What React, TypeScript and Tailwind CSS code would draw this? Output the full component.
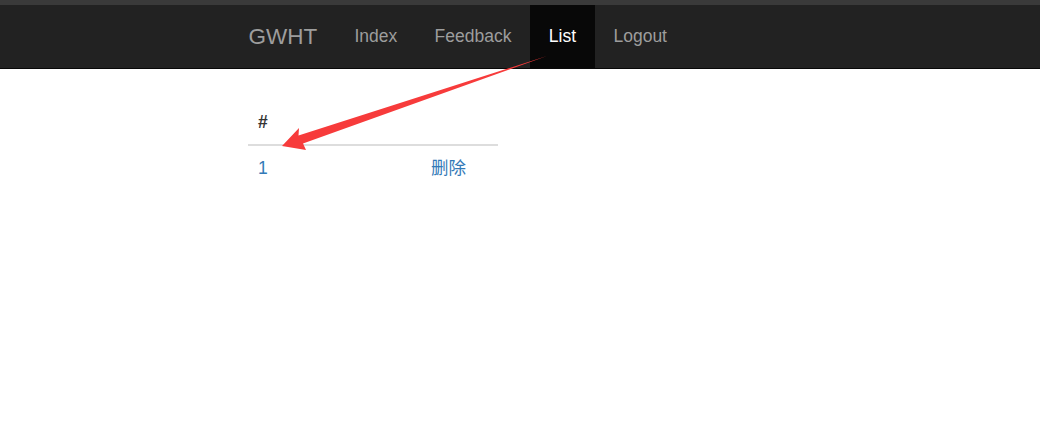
const navItems = [
  { label: "Index", active: false },
  { label: "Feedback", active: false },
  { label: "List", active: true },
  { label: "Logout", active: false },
];

const rows = [{ id: 1 }];

const Arrow = () => (
  <svg
    className="absolute left-0 top-0 pointer-events-none"
    width="1040"
    height="444"
    viewBox="0 0 1040 444"
  >
    <polygon
      points="282,146 299,128 298.5,135.5 547,56 303,143.5 306,150"
      fill="#f73b3b"
    />
  </svg>
);

export default function App() {
  return (
    <div
      className="relative w-[1040px] h-[444px] bg-white overflow-hidden"
      style={{ fontFamily: '"Liberation Sans", Arial, "Noto Sans CJK SC", sans-serif' }}
    >
      <div className="h-[5px] bg-[#3a3a3a]" />
      <nav className="h-[64px] bg-[#222222] border-b border-[#080808] flex items-stretch pl-[230px]">
        <a className="flex items-center px-[18.5px] text-[22.5px] text-[#9d9d9d]">GWHT</a>
        <ul className="flex items-stretch">
          {navItems.map((item) => (
            <li
              key={item.label}
              className={
                item.active
                  ? "flex items-center px-[18.7px] text-[17.5px] bg-[#080808] text-white"
                  : "flex items-center px-[18.7px] text-[17.5px] text-[#9d9d9d]"
              }
            >
              {item.label}
            </li>
          ))}
        </ul>
      </nav>

      <div className="pl-[248px] pt-[31px]">
        <table className="w-[250px] text-[17.5px] text-[#333333]">
          <thead>
            <tr className="border-b-[2.5px] border-[#dddddd]">
              <th className="w-[173px] h-[45px] px-[10px] text-left font-bold">#</th>
              <th className="px-[10px]" />
            </tr>
          </thead>
          <tbody>
            {rows.map((row) => (
              <tr key={row.id}>
                <td className="h-[45px] px-[10px] text-[#337ab7]">{row.id}</td>
                <td className="px-[10px] text-[#337ab7]">删除</td>
              </tr>
            ))}
          </tbody>
        </table>
      </div>

      <Arrow />
    </div>
  );
}
